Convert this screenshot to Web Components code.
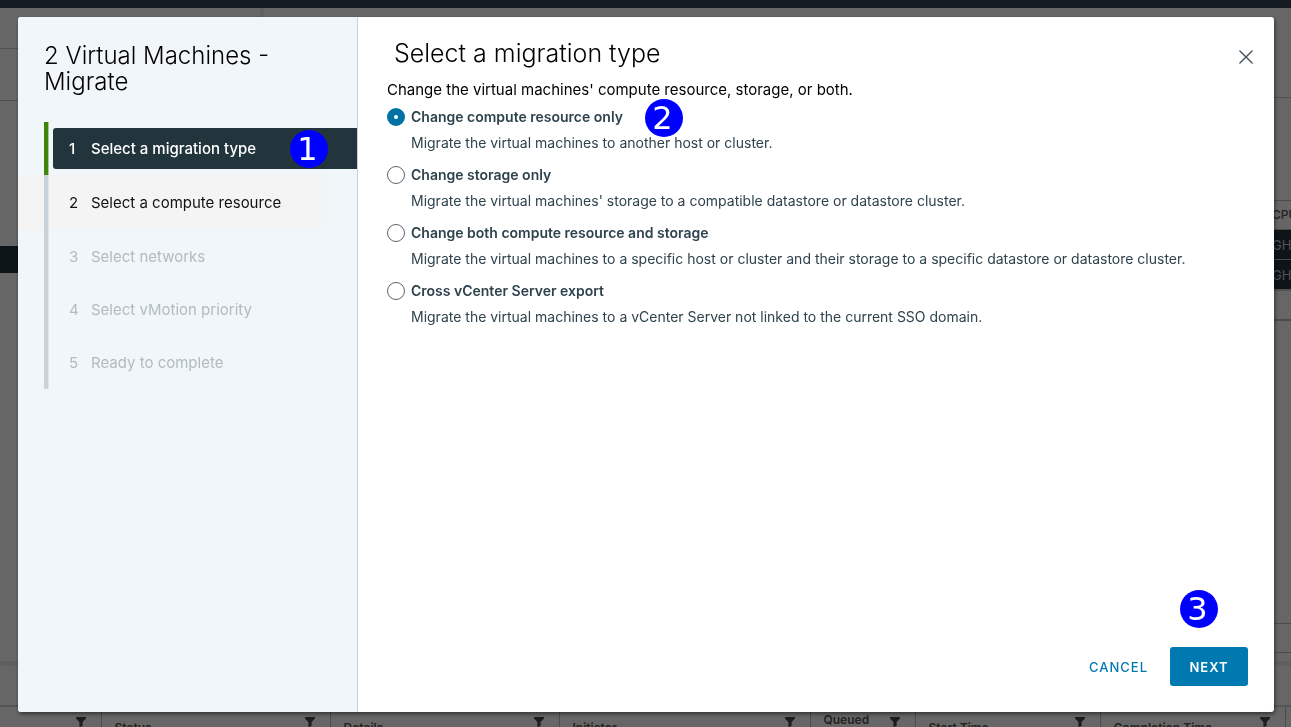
<!DOCTYPE html>
<html lang="en">
<head>
<meta charset="utf-8">
<title>2 Virtual Machines - Migrate</title>
<style>
  html, body { margin: 0; height: 100%; }
  body { font-family: Inter, "Liberation Sans", sans-serif; font-size: 14px; color: #000; overflow: hidden; background: #fff; }
</style>
</head>
<body>
<vsphere-app></vsphere-app>
<wizard-dialog heading="2 Virtual Machines - Migrate" page-title="Select a migration type">
  <wizard-steps slot="steps"></wizard-steps>
  <migration-form></migration-form>
  <wizard-actions slot="actions"></wizard-actions>
</wizard-dialog>

<script>
function define(name, html, setup) {
  const template = document.createElement('template');
  template.innerHTML = html;
  customElements.define(name, class extends HTMLElement {
    constructor() {
      super();
      this.attachShadow({ mode: 'open' }).append(template.content.cloneNode(true));
    }
    connectedCallback() { if (setup) setup(this, this.shadowRoot); }
  });
}

/* Numbered callout disc */
define('callout-badge', `
  <style>
    :host { display: flex; align-items: center; justify-content: center; box-sizing: border-box;
      width: 38px; height: 38px; border-radius: 50%; background: #00f; color: #fff; padding-right: 3px;
      font: 32px/38px "DejaVu Sans", sans-serif; flex: none; }
  </style><slot></slot>`);

define('filter-icon', `
  <style>:host { display: block; width: 10px; height: 10px; flex: none; } svg { display: block; }</style>
  <svg width="10" height="10" viewBox="0 0 10 10" aria-hidden="true"><path fill="#4a4a4a" d="M0 0h10v1.6L6.6 5v4L3.4 10V5L0 1.6z"/></svg>`);

/* Recent tasks grid at the bottom of the client */
define('recent-tasks', `
  <style>
    :host { display: block; height: 66px; border-top: 5px solid #eee; box-sizing: border-box; overflow: hidden; }
    .bar { height: 39px; border-bottom: 2px solid #cdd6dc; }
    table { width: 100%; border-collapse: collapse; table-layout: fixed; }
    th { padding: 5px 15px 0 13px; height: 32px; text-align: left; vertical-align: top; border-right: 1px solid #bbb;
      font-weight: 600; font-size: 12px; line-height: 16px; color: #565656; box-sizing: border-box; }
    th:last-child { border: 0; }
    div.cell { display: flex; justify-content: space-between; }
    span { padding-top: 8px; white-space: nowrap; }
    span.two { padding: 0; white-space: normal; width: 48px; }
    filter-icon { margin-top: 5px; }
  </style>
  <div class="bar"></div>
  <table>
    <colgroup><col style="width:101px"><col style="width:229px"><col style="width:229px"><col style="width:251px"><col style="width:105px"><col style="width:185px"><col style="width:185px"><col></colgroup>
    <thead><tr>
      <th><div class="cell"><span></span><filter-icon></filter-icon></div></th>
      <th><div class="cell"><span>Status</span><filter-icon></filter-icon></div></th>
      <th><div class="cell"><span>Details</span><filter-icon></filter-icon></div></th>
      <th><div class="cell"><span>Initiator</span><filter-icon></filter-icon></div></th>
      <th><div class="cell"><span class="two">Queued</span><filter-icon></filter-icon></div></th>
      <th><div class="cell"><span>Start Time</span><filter-icon></filter-icon></div></th>
      <th><div class="cell"><span>Completion Time</span><filter-icon></filter-icon></div></th>
      <th></th>
    </tr></thead>
  </table>`);

/* Client page that lies behind the dialog */
define('vsphere-app', `
  <style>
    :host { display: flex; flex-direction: column; height: 100vh; overflow: hidden; }
    header { height: 8px; background: #324458; flex: none; }
    main { flex: 1; min-height: 0; display: grid; grid-template-columns: 264px 1fr; }
    nav { border-right: 4px solid #f1f1f1; }
    .tabs { height: 40px; border-bottom: 1px solid #ccc; }
    .tree { height: 51px; border-bottom: 1px solid #bcc8ce; }
    .active { margin-top: 145px; height: 27px; background: #22343c; }
    section { display: flex; flex-direction: column; min-width: 0; overflow: hidden; }
    .summary { height: 89px; border-bottom: 1px solid #ccc; flex: none; }
    .tools { height: 102px; flex: none; }
    table { width: 100%; border-collapse: collapse; table-layout: fixed; color: #ccc; flex: none; border-bottom: 2px solid #ccc; }
    th, td { height: 29px; padding: 0; font-size: 13px; line-height: 16px; font-weight: 400; text-align: left; white-space: nowrap; overflow: hidden; border-top: 1px solid #bbb; }
    th { height: 28px; font-size: 12px; font-weight: 500; color: #555; }
    tbody { background: #22343c; }
    th:last-child, td:last-child { width: 19px; }
    .rest { height: 28px; border-bottom: 2px solid #bbb; }
    .foot { margin-top: auto; height: 28px; border: solid #bbb; border-width: 1px 0; margin-bottom: 8px; }
  </style>
  <header></header>
  <main>
    <nav><div class="tabs"></div><div class="tree"></div><div class="active"></div></nav>
    <section>
      <div class="summary"></div><div class="tools"></div>
      <table><thead><tr><th></th><th>CPU</th></tr></thead>
        <tbody><tr><td></td><td>GH</td></tr><tr><td></td><td>GH</td></tr></tbody></table>
      <div class="rest"></div><div class="foot"></div>
    </section>
  </main>
  <recent-tasks></recent-tasks>`);

/* Modal frame */
define('wizard-dialog', `
  <style>
    :host { position: fixed; inset: 0; display: flex; padding: 17px 17px 15px 18px; box-sizing: border-box; background: rgba(0,0,0,.6); }
    .dialog { flex: 1; min-width: 0; display: grid; grid-template-columns: 340px 1fr; background: #fff; border-radius: 3px;
      overflow: hidden; box-shadow: 1px 2px 4px rgba(0,0,0,.5); }
    aside { background: #f0f6f9; border-right: 1px solid #c8d2d7; }
    h1, h2 { margin: 0; font-weight: 300; font-size: 24px; line-height: 26px; }
    h1 { padding: 26px 60px 27px 26px; }
    .page { display: flex; flex-direction: column; padding: 20px 16px 26px 29px; min-width: 0; }
    .top { display: flex; justify-content: space-between; align-items: flex-start; }
    h2 { font-size: 25px; line-height: 32px; padding-left: 7px; }
    button { border: 0; background: none; padding: 5px; margin-top: 8px; width: 24px; height: 24px; }
    svg { display: block; }
    .body { flex: 1; padding-top: 10px; }
    .actions { padding-right: 10px; }
  </style>
  <div class="dialog" role="dialog" aria-modal="true">
    <aside><h1></h1><slot name="steps"></slot></aside>
    <div class="page">
      <div class="top"><h2></h2>
        <button aria-label="Close"><svg width="14" height="14" viewBox="0 0 14 14"><path d="M.9.9l12.2 12.2M13.1.9L.9 13.1" stroke="#44555f" stroke-width="1.4" stroke-linecap="round"/></svg></button>
      </div>
      <div class="body"><slot></slot></div>
      <div class="actions"><slot name="actions"></slot></div>
    </div>
  </div>`, (host, root) => {
    root.querySelector('h1').textContent = host.getAttribute('heading');
    root.querySelector('h2').textContent = host.getAttribute('page-title');
  });

define('wizard-step', `
  <style>
    :host { display: flex; height: 53px; padding-left: 26px; color: #b2bbc0; }
    .rail { box-sizing: border-box; width: 5px; margin-right: 4px; background: #c9d2d8; border-right: 1px solid #dfe6ea; flex: none; }
    button { flex: 1; display: flex; align-items: center; margin: 6px 0; padding: 0 29px 0 16px; border: 0; border-radius: 3px 0 0 3px;
      background: none; color: inherit; font: inherit; font-size: 15px; line-height: 20px; text-align: left; }
    .number { width: 22px; flex: none; }
    .label { flex: 1; white-space: nowrap; }
    :host([state=current]) { color: #fff; }
    :host([state=current]) button { background: #22343c; font-weight: 500; }
    :host([state=current]) .rail { background: #3f850b; border-color: #a9c79a; }
    :host([state=next]) { height: 55px; color: #111; background: linear-gradient(90deg, #f4f4f4 88%, #f0f6f9 92%); }
  </style>
  <div class="rail"></div>
  <button><span class="number"></span><span class="label"><slot></slot></span><slot name="badge"></slot></button>`,
  (host, root) => {
    root.querySelector('.number').textContent = host.getAttribute('number');
    root.querySelector('button').disabled = !host.hasAttribute('state');
  });

define('wizard-steps', `
  <style>:host { display: block; }</style>
  <wizard-step number="1" state="current">Select a migration type<callout-badge slot="badge">1</callout-badge></wizard-step>
  <wizard-step number="2" state="next">Select a compute resource</wizard-step>
  <wizard-step number="3">Select networks</wizard-step>
  <wizard-step number="4">Select vMotion priority</wizard-step>
  <wizard-step number="5">Ready to complete</wizard-step>`);

define('migration-form', `
  <style>
    :host { display: block; color: #2f434d; }
    p { margin: 0; font-size: 15px; line-height: 22px; color: #000; }
    .option { display: grid; grid-template-columns: 24px 1fr; height: 58px; line-height: 26px; grid-template-rows: 32px 26px; align-items: start; }
    .head { display: flex; align-items: center; height: 32px; position: relative; justify-self: start; }
    label { font-weight: 600; }
    .text { grid-column: 2; line-height: 20px; }
    input { appearance: none; margin: 7px 0; width: 18px; height: 18px; border: 1px solid #5f6368; border-radius: 50%; background: #fff; }
    input:checked { border: 7px solid #0072a3; }
    callout-badge { position: absolute; left: calc(100% + 22px); top: -2px; }
  </style>
  <p>Change the virtual machines' compute resource, storage, or both.</p>
  <div class="option"><input type="radio" name="type" id="compute" checked><div class="head"><label for="compute">Change compute resource only</label><callout-badge>2</callout-badge></div>
    <div class="text">Migrate the virtual machines to another host or cluster.</div></div>
  <div class="option"><input type="radio" name="type" id="storage"><div class="head"><label for="storage">Change storage only</label></div>
    <div class="text">Migrate the virtual machines' storage to a compatible datastore or datastore cluster.</div></div>
  <div class="option"><input type="radio" name="type" id="both"><div class="head"><label for="both">Change both compute resource and storage</label></div>
    <div class="text">Migrate the virtual machines to a specific host or cluster and their storage to a specific datastore or datastore cluster.</div></div>
  <div class="option"><input type="radio" name="type" id="cross"><div class="head"><label for="cross">Cross vCenter Server export</label></div>
    <div class="text">Migrate the virtual machines to a vCenter Server not linked to the current SSO domain.</div></div>`);

define('wizard-actions', `
  <style>
    :host { display: flex; justify-content: flex-end; gap: 4px; }
    button { height: 39px; border: 0; border-radius: 3px; padding: 0 18px; background: none; color: #0079b0;
      font: 500 13px/20px Inter, sans-serif; letter-spacing: 1px; }
    .primary { background: #0079b0; color: #fff; font-weight: 600; min-width: 78px; }
    .next { position: relative; }
    callout-badge { position: absolute; left: 10px; bottom: calc(100% + 19px); }
  </style>
  <button>CANCEL</button>
  <div class="next"><button class="primary">NEXT</button><callout-badge>3</callout-badge></div>`);
</script>
</body>
</html>
